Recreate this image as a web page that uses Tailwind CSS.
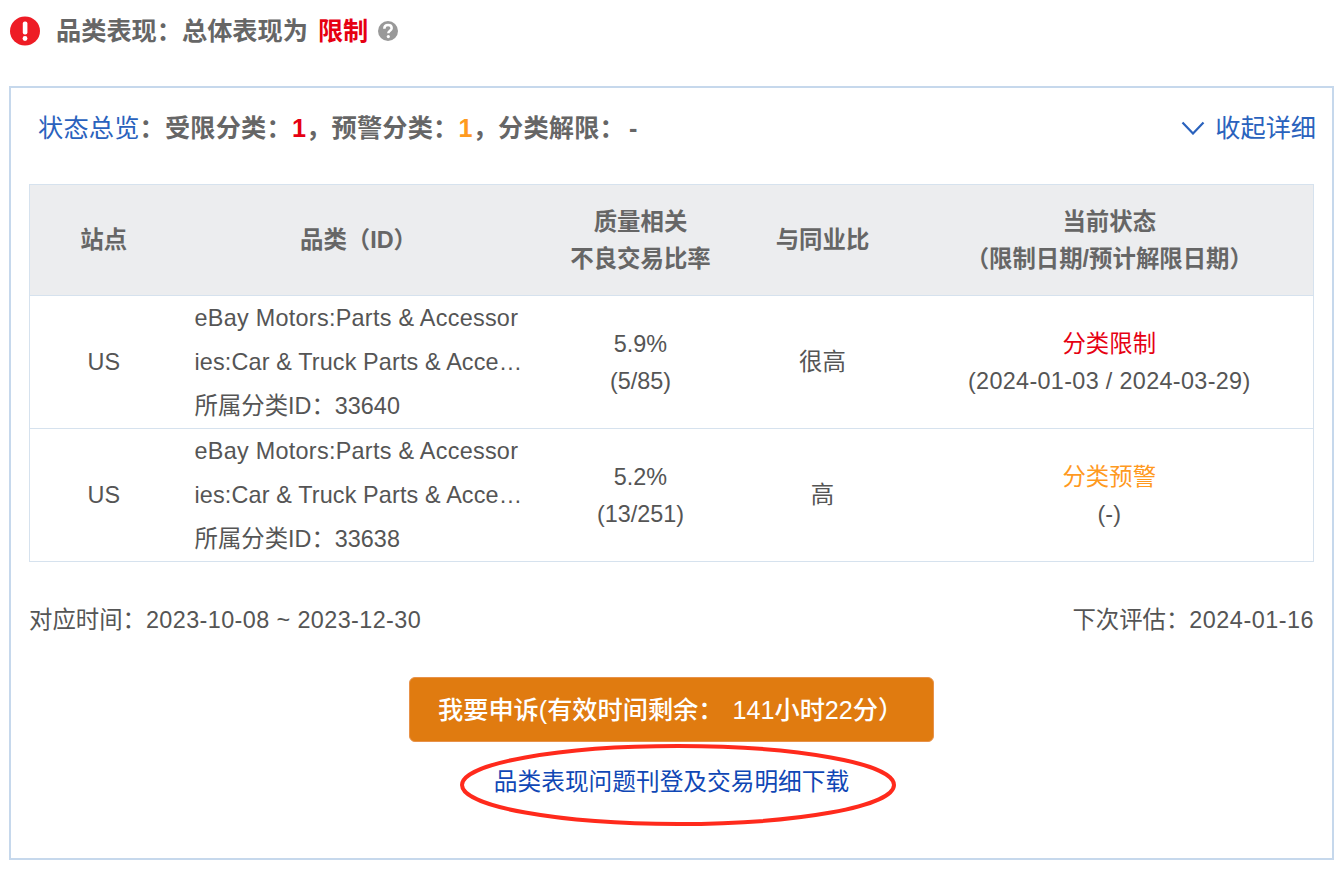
<!doctype html>
<html lang="zh">
<head>
    <meta charset="utf-8">
    <meta name="viewport" content="width=device-width,initial-scale=1">
    <script src="https://cdn.jsdelivr.net/npm/@tailwindcss/browser@4"></script>
    <title>品类表现</title>
</head>
<body class="bg-white h-[880px] overflow-hidden text-[23.4px] leading-[44px] text-[#555] font-['Liberation_Sans','Noto_Sans_CJK_SC',sans-serif]">

<!-- 标题 -->
<div class="flex items-center h-[62px] pl-[10px] text-[25.2px] font-bold text-[#666]">
    <svg class="w-[30px] h-[30px] mr-[16px]" viewBox="0 0 30 30">
        <ellipse cx="15" cy="15" rx="15" ry="14.500" fill="#ee1c25"/>
        <rect x="12.800" y="5.500" width="4.600" height="13" rx="2" fill="#fff"/>
        <circle cx="15" cy="22.500" r="2.400" fill="#fff"/>
    </svg>
    <span>品类表现：总体表现为</span>
    <span class="ml-[10px] text-[#e60012]">限制</span>
    <svg class="w-[20px] h-[20px] ml-[10px]" viewBox="0 0 19 19">
        <circle cx="9.500" cy="9.500" r="9.500" fill="#999"/>
        <path d="M6 7.400c0-2.200 1.500-3.500 3.600-3.500s3.400 1.200 3.400 3c0 2.400-3.200 2.400-3.200 4.700" fill="none" stroke="#fff" stroke-width="2.400"/>
        <circle cx="9.800" cy="14.800" r="1.500" fill="#fff"/>
    </svg>
</div>

<!-- 详情框 -->
<div class="mt-[24px] ml-[9px] w-[1325px] h-[774px] border-2 border-[#c6d8ec] px-[18px]">
    <div class="flex items-center justify-between h-[80px]">
        <div class="pl-[9px] text-[25.2px] font-bold text-[#666] tracking-[0.2px]">
            <span class="font-normal text-[#2a62bd]">状态总览</span>：受限分类：<span class="text-[#e60012]">1</span>，预警分类：<span class="text-[#ff9a1f]">1</span>，分类解限：<span class="ml-[4px]">-</span>
        </div>
        <div class="flex items-center text-[25.200px] text-[#2a62bd] -mr-[2px]">
            <svg class="w-[24px] h-[14px] mr-[10px]" viewBox="0 0 24 14"><path d="M1.500 1.500l10.500 11 10.500-11" fill="none" stroke="#2a62bd" stroke-width="2.200"/></svg>
            收起详细
        </div>
    </div>

    <table class="mt-[16px] w-[1285px] table-fixed border border-[#d6e2ee] border-collapse text-center">
        <colgroup>
            <col class="w-[148px]"><col class="w-[348px]"><col class="w-[230px]"><col class="w-[134px]"><col>
        </colgroup>
        <thead class="bg-[#ecedef] text-[#666]">
            <tr class="h-[111px] leading-[37px] border-b border-[#d6e2ee]">
                <th class="font-bold">站点</th>
                <th class="font-bold pl-[14px]">品类（ID）</th>
                <th class="font-bold pt-[2px]">质量相关<br>不良交易比率</th>
                <th class="font-bold">与同业比</th>
                <th class="font-bold pl-[16px] pt-[2px]">当前状态<br>（限制日期/预计解限日期）</th>
            </tr>
        </thead>
        <tbody>
            <tr class="h-[133px] border-b border-[#d6e2ee]">
                <td>US</td>
                <td class="text-left pl-[17px] whitespace-nowrap">
                    <div class="tracking-[0.28px]">eBay Motors:Parts &amp; Accessor</div>
                    <div class="tracking-[0.14px]">ies:Car &amp; Truck Parts &amp; Acce…</div>
                    <div>所属分类ID：33640</div>
                </td>
                <td class="leading-[37px] pt-[2px]">5.9%<br>(5/85)</td>
                <td>很高</td>
                <td class="pl-[16px] leading-[37px] pt-[2px]"><span class="text-[#e60012]">分类限制</span><br><span class="tracking-[0.33px]">(2024-01-03 / 2024-03-29)</span></td>
            </tr>
            <tr class="h-[133px]">
                <td>US</td>
                <td class="text-left pl-[17px] whitespace-nowrap">
                    <div class="tracking-[0.28px]">eBay Motors:Parts &amp; Accessor</div>
                    <div class="tracking-[0.14px]">ies:Car &amp; Truck Parts &amp; Acce…</div>
                    <div>所属分类ID：33638</div>
                </td>
                <td class="leading-[37px] pt-[2px]">5.2%<br>(13/251)</td>
                <td>高</td>
                <td class="pl-[16px] leading-[37px] pt-[2px]"><span class="text-[#ff9a1f]">分类预警</span><br>(-)</td>
            </tr>
        </tbody>
    </table>

    <div class="flex justify-between mt-[36px]">
        <span>对应时间：<span class="tracking-[0.4px]">2023-10-08 ~ 2023-12-30</span></span>
        <span>下次评估：<span class="tracking-[0.5px]">2024-01-16</span></span>
    </div>

    <div class="flex flex-col items-center mt-[35px]">
        <button class="w-[525px] h-[65px] bg-[#e07b10] border border-[#e8924a] rounded-[6px] text-white text-[25.2px] font-medium text-left pl-[28px]">我要申诉(有效时间剩余： <span class="ml-[2px]">141小时22分）</span></button>
        <a class="relative mt-[18px] text-[23.700px] text-[#0f47b5]" href="#">
            品类表现问题刊登及交易明细下载
            <svg class="absolute left-[-34px] top-[-17px] w-[438px] h-[84px]" viewBox="0 0 438 84"><ellipse cx="218" cy="42" rx="216" ry="39" fill="none" stroke="#ff2a1c" stroke-width="4"/></svg>
        </a>
    </div>
</div>

</body>
</html>
